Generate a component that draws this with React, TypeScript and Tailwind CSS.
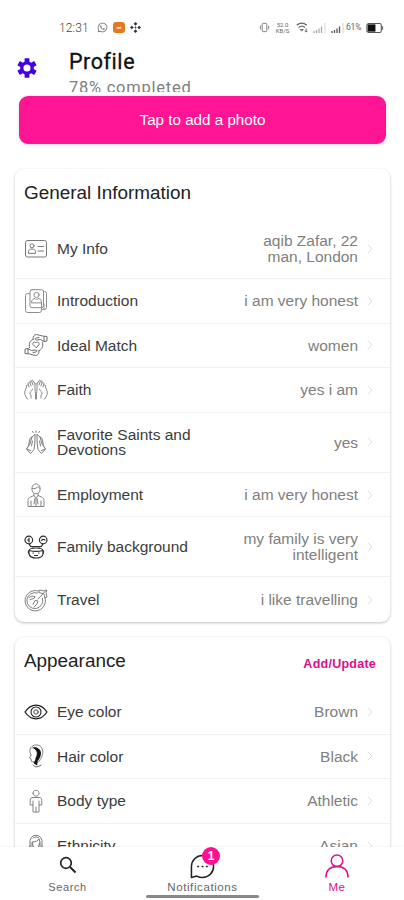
import React from "react";
import { FaWhatsapp } from "react-icons/fa";

type IconProps = {
  children: React.ReactNode;
  color?: string;
  weight?: number;
};

type RowData = {
  icon: React.ReactNode;
  label: string;
  value: string[];
  tall?: boolean;
};

function LineIcon({ children, color = "#707070", weight = 1 }: IconProps) {
  return (
    <svg
      viewBox="0 0 24 24"
      className="h-6 w-6 shrink-0"
      fill="none"
      stroke={color}
      strokeWidth={weight}
      strokeLinecap="round"
      strokeLinejoin="round"
    >
      {children}
    </svg>
  );
}

const CardIcon = (
  <LineIcon color="#777">
    <rect x="1.500" y="3.500" width="21" height="16.500" rx="2" />
    <circle cx="8" cy="8.800" r="2" />
    <path d="M4.500 16v-1.500c0-1.500 1.500-2 2.500-2.500h2c1 .5 2.500 1 2.500 2.500V16zM14 9.500h5.500M14 14h5.500" />
  </LineIcon>
);

const IntroIcon = (
  <LineIcon color="#8c8c8c">
    <path d="M5.500 4.500H3.500a2 2 0 0 0-2 2v15a2 2 0 0 0 2 2h12a2 2 0 0 0 2-2M8 .7h9.500a2 2 0 0 1 2 2v14a2 2 0 0 1-2 2H8a2 2 0 0 1-2-2v-14a2 2 0 0 1 2-2zM19.500 2.500h1a2 2 0 0 1 2 2v14a2 2 0 0 1-2 2h-3" />
    <circle cx="12.500" cy="6" r="2.600" />
    <path d="M7.500 13.500c0-3 2-4 3.500-4l1.500 1.500L14 9.500c2 0 3.500 1 3.500 4zM17.500 14v6M20 15v5" />
  </LineIcon>
);

const MatchIcon = (
  <LineIcon color="#6c6c6c">
    <path d="M9 6.500c0-3 1-5 3.500-5l6 1.500 4.500.5v4.500l-3 .5-3.500-2-4 .5c-1.500.2-2-1.500-.5-2l3-.5M15 17.500c0 3-1 5-3.500 5l-6-1.500-4.500-.5v-4.500l3-.5 3.500 2 4-.5c1.500-.2 2 1.500.5 2l-3 .5" />
    <path d="M5.500 14.500c-1-4 .5-7 3.500-8M18.500 9.500c1 4-.5 7-3.500 8M12 14.500l-3-3c-.8-2 1.500-3.300 3-1.500 1.500-1.800 3.800-.5 3 1.500zM20 3.500V8M4 16v4.500" />
  </LineIcon>
);

const FaithIcon = (
  <LineIcon color="#8c8c8c">
    <path d="M11.500 21v-5c0-2-.5-3-.5-5V5M11 6L9 2.500c-.8-.8-1.500-.2-1.300.7L9 7M7.500 3.500C6.500 2.500 5.500 3 6 4l1 4M5.800 5C4.500 4 3.800 5 4.200 6L5 9M4 7c-1.500-.5-2 .5-1.500 2l-1.500 4c-1 2.500 0 5 2.500 8M7 20v-3c-1.500-1-1.500-3 .5-4l1-2" />
    <path d="M12.500 21v-5c0-2 .5-3 .5-5V5M13 6l2-3.500c.8-.8 1.500-.2 1.300.7L15 7M16.500 3.500c1-1 2-.5 1.500.5l-1 4M18.200 5c1.300-1 2 0 1.600 1L19 9M20 7c1.500-.5 2 .5 1.500 2l1.500 4c1 2.500 0 5-2.500 8M17 20v-3c1.500-1 1.500-3-.5-4l-1-2" />
  </LineIcon>
);

const PrayIcon = (
  <LineIcon color="#7c7c7c">
    <path d="M10.800 4.500L8 7l-2 7-3.500 5 4 4.500 3.500-4 .8-6zM8 7c-1.500 0-2 1-2.300 3L4.500 16M2.500 19l4 1.500M8.500 11l-1 5M13.200 4.500L16 7l2 7 3.500 5-4 4.500-3.500-4-.8-6zM16 7c1.500 0 2 1 2.300 3l1.200 6M21.500 19l-4 1.500M15.500 11l1 5" />
    <path d="M12 .9v1.500M8.500 1.500l.8 1.200M15.500 1.500l-.8 1.200" />
  </LineIcon>
);

const WorkIcon = (
  <LineIcon color="#858585">
    <path d="M8 5c0-5.500 8-5.500 8 0v2c0 5-8 5-8 0zM8 5.500c3 .5 5-.5 6-2l2 2M10 10.500v2L6.500 14c-1.700.6-2.500 2-2.500 3.500v6h16v-6c0-1.500-.8-2.900-2.500-3.500L14 12.500v-2M10 12.500l2 3 2-3M11 15.500l-1 5.500M13 15.500l1 5.500M7 18v5.500M17 18v5.500M12 16v7" />
  </LineIcon>
);

const FamilyIcon = (
  <LineIcon color="#2d2d2d" weight={1.2}>
    <circle cx="4.800" cy="5" r="3.800" />
    <circle cx="19.200" cy="5" r="3.800" />
    <path d="M5 3v4M3.500 5h1.500M17.500 5.500c1-1.500 2-1.500 3.500-.5M5.500 9c0 2 1.500 3 4 3M18.500 9c0 2-1.500 3-4 3M8 11.500h8" />
    <path d="M5 16c0-4 14-4 14 0v2.500c0 6-14 6-14 0zM5 15.500c4 1 10 1 14 0M9 18h.5M14.500 18h.5M10.500 20.500h3M4.500 16v2M19.500 16v2" />
  </LineIcon>
);

const TravelIcon = (
  <LineIcon color="#808080">
    <path d="M21 9.500A10.200 10.200 0 1 1 14.500 3M18.500 10A8 8 0 1 1 13.500 5" />
    <path d="M14 11l8-8.500M15 4.500l5 1.500 1 4 2-1-1-4.500 1-2-1-.7-2 1.200L16 2zM5 9.500l3-1.500 3 .5-1 2-4 1M9 16.500l2-4 3 .5-1 3-3 3" />
  </LineIcon>
);

const EyeIcon = (
  <LineIcon color="#1f1f1f" weight={1.3}>
    <path d="M1 12c3-4.500 7-6.800 11-6.800s8 2.300 11 6.800c-3 4.500-7 6.800-11 6.800S4 16.500 1 12z" />
    <circle cx="12" cy="12" r="5" strokeWidth="1.100" />
    <circle cx="12" cy="12" r="2.200" strokeWidth=".8" />
  </LineIcon>
);

const HairIcon = (
  <LineIcon color="#777" weight={0.9}>
    <path d="M7 11C3.500 5 8 1 12 1c6-1 9 7 5 13-1 2-2 4-4 5M7 11l-1.500 3 1.500.7.5 3 3 .3M8 4c3-2 7 0 8 5" />
    <path
      d="M10 4c5-1 8 4 6 8-1 4-4 5-3 9l-3-2c1-2 2-3 2-5 2-4 2-7-2-10z"
      fill="#111"
      stroke="#111"
    />
    <path d="M9 21c2 2.500 5 2.500 8 0" stroke="#444" />
  </LineIcon>
);

const BodyIcon = (
  <LineIcon color="#858585">
    <path d="M9 4.200c0-4 6-4 6 0s-6 4-6 0zM8.500 8.500h7c1.500 0 2.300 1 2.300 2.500V16H15v7H9v-7H6.200v-5C6.200 9.500 7 8.500 8.500 8.500zM9 12v4M15 12v4M12 18v5" />
  </LineIcon>
);

const EthnicityIcon = (
  <LineIcon color="#777">
    <path d="M6 15V8c0-9 12-9 12 0v7M8 15V8c3 0 6-1 7-3l1 3v7M8.500 9c0 7 7 7 7 0M4.500 21c0-4 1.500-6 4-6h7c2.500 0 4 2 4 6M6 12l-1 4M18 12l1 4M9 4c2-1.500 4-1.500 6 0" />
  </LineIcon>
);

const general: RowData[] = [
  { icon: CardIcon, label: "My Info", value: ["aqib Zafar, 22", "man, London"], tall: true },
  { icon: IntroIcon, label: "Introduction", value: ["i am very honest"] },
  { icon: MatchIcon, label: "Ideal Match", value: ["women"] },
  { icon: FaithIcon, label: "Faith", value: ["yes i am"] },
  { icon: PrayIcon, label: "Favorite Saints and Devotions", value: ["yes"], tall: true },
  { icon: WorkIcon, label: "Employment", value: ["i am very honest"] },
  { icon: FamilyIcon, label: "Family background", value: ["my family is very", "intelligent"], tall: true },
  { icon: TravelIcon, label: "Travel", value: ["i like travelling"] },
];

const appearance: RowData[] = [
  { icon: EyeIcon, label: "Eye color", value: ["Brown"] },
  { icon: HairIcon, label: "Hair color", value: ["Black"] },
  { icon: BodyIcon, label: "Body type", value: ["Athletic"] },
  { icon: EthnicityIcon, label: "Ethnicity", value: ["Asian"] },
];

function Row({ icon, label, value, tall }: RowData) {
  return (
    <div
      className={`flex items-center border-b border-[#f1f1f1] pl-[9px] pr-[17px] text-[15.500px] leading-[15.500px] last:border-b-0 ${
        tall ? "h-[60px]" : "h-[44.600px]"
      }`}
    >
      {icon}
      <div className="ml-[9px] w-[145px] text-[#3c3c3c]">{label}</div>
      <div className="flex-1 text-right text-[#808080]">
        {value.map((line) => (
          <div key={line} className="whitespace-nowrap">
            {line}
          </div>
        ))}
      </div>
      <svg viewBox="0 0 6 10" className="ml-[9px] h-[10px] w-[6px]" fill="none" stroke="#dedede">
        <path d="M.7.7 5 5 .7 9.300" />
      </svg>
    </div>
  );
}

function Card({ title, rows, action }: { title: string; rows: RowData[]; action?: string }) {
  return (
    <section className="ml-[15px] mr-[14px] shrink-0 rounded-[9px] bg-white shadow-[0_1px_3px_rgba(0,0,0,0.25)]">
      <div className={`flex items-start justify-between pl-[9px] pr-[14px] ${action ? "h-[53px]" : "h-[50px]"}`}>
        <h2 className="pt-[11px] text-[18.900px] leading-[26px] text-[#222]">{title}</h2>
        {action && (
          <span className="pt-[18px] text-[12.500px] font-bold leading-[18px] tracking-[0.250px] text-[#dc0f8c]">
            {action}
          </span>
        )}
      </div>
      {rows.map((row) => (
        <Row key={row.label} {...row} />
      ))}
    </section>
  );
}

function Signal({ color }: { color: string }) {
  return (
    <svg viewBox="0 0 13 10" className="h-[10px] w-[13px]" fill="none" stroke={color} strokeWidth="1.300">
      <path d="M1 10V8M3.500 10V7M6 10V5.500M8.500 10V3.500" />
      <path d="M12 10V0" stroke="#ddd" />
    </svg>
  );
}

function StatusBar() {
  return (
    <div className="flex h-[40px] shrink-0 items-center pl-[59px] pr-[20px] pt-[15px] font-[Roboto] text-[#666]">
      <span className="w-[38px] text-[12px] font-light tracking-[0.1px] text-[#444]">12:31</span>
      <FaWhatsapp className="h-[11px] w-[11px] text-[#777]" />
      <span className="ml-[5px] flex h-[11px] w-[12px] items-center justify-center rounded-[3px] bg-[#e37a20] text-[4px] font-bold text-white">
        mi
      </span>
      <svg viewBox="0 0 12 12" className="ml-[5px] h-[11px] w-[11px]" fill="#333">
        <path d="M6 0l2 2-2 2-2-2zM6 8l2 2-2 2-2-2zM0 6l2-2 2 2-2 2zM8 6l2-2 2 2-2 2z" />
        <circle cx="6" cy="6" r="1" />
      </svg>
      <div className="ml-auto flex items-center">
        <svg viewBox="0 0 12 12" className="h-[11px] w-[11px]" fill="none" stroke="#777">
          <rect x="3.500" y="1.500" width="5" height="9" rx="1" />
          <path d="M1.500 4v4M10.500 4v4" />
        </svg>
        <div className="ml-[4px] w-[17px] text-center text-[6px] leading-[6px]">
          <div>52.0</div>
          <div>KB/S</div>
        </div>
        <svg viewBox="0 0 14 12" className="ml-[5px] h-[11px] w-[13px]" fill="none" stroke="#666" strokeWidth="1.300">
          <path d="M.7 3.500c3.500-3 7.500-3 11 0M2.700 6c2.500-2 5-2 7 0" />
          <path d="M4.500 8.200 6.200 10l1.600-1.800zM11 7v4M9.500 9.500l1.500 1.500 1.500-1.500" strokeWidth="1" />
        </svg>
        <span className="ml-[4px]">
          <Signal color="#aaa" />
        </span>
        <span className="ml-[5px]">
          <Signal color="#555" />
        </span>
        <span className="ml-[2px] w-[18px] text-[8.500px] leading-none tracking-[-0.2px]">61%</span>
        <svg viewBox="0 0 19 11" className="ml-[2px] h-[10px] w-[18px]">
          <rect x=".6" y=".6" width="15.800" height="9.800" rx="2" fill="white" stroke="#555" strokeWidth="1.200" />
          <rect x="1.500" y="1.500" width="8.500" height="8" fill="#111" />
          <path d="M17.800 3.500v4" stroke="#666" strokeWidth="1.200" />
        </svg>
      </div>
    </div>
  );
}

function Gear() {
  return (
    <svg viewBox="0 0 20 20" className="h-[20px] w-[20px]" fill="none" stroke="#4300e0">
      <circle cx="10" cy="10" r="5.200" strokeWidth="3.300" />
      <path
        d="M10 .3v4M10 15.700v4M1.600 5.150l3.400 2M15 12.850l3.400 2M1.600 14.850l3.400-2M15 7.150l3.400-2"
        strokeWidth="4.800"
      />
    </svg>
  );
}

function BottomNav() {
  return (
    <nav className="relative flex h-[53px] shrink-0 bg-white text-[11.500px] leading-[14px] tracking-[0.600px] text-[#666] shadow-[0_-1px_2px_rgba(0,0,0,0.04)]">
      <div className="flex w-[135px] flex-col items-center">
        <div className="flex h-[33px] items-center pt-[3px]">
          <svg viewBox="0 0 18 18" className="h-[18px] w-[18px]" fill="none" stroke="#222">
            <circle cx="7" cy="7" r="5.300" strokeWidth="1.700" />
            <path d="M11 11l5.500 5.500" strokeWidth="2" />
          </svg>
        </div>
        <span className="text-[11px]">Search</span>
      </div>
      <div className="flex w-[135px] flex-col items-center">
        <div className="relative flex h-[33px] items-center pt-[5px]">
          <svg viewBox="0 0 26 26" className="h-[25px] w-[25px]" fill="none" stroke="#222" strokeWidth="1.600">
            <path d="M1.500 24.500V13a11.500 11.500 0 1 1 11.500 11.500c-2.500 0-4.500-.7-6-1.500z" strokeLinejoin="round" />
            <path d="M7.500 13h2M12 13h2M16.500 13h2" strokeWidth="1.700" />
          </svg>
          <span className="absolute left-[12px] top-0 flex h-[18px] w-[18px] items-center justify-center rounded-full bg-[#ff0f93] text-[12px] font-bold tracking-normal text-white">
            1
          </span>
        </div>
        <span>Notifications</span>
      </div>
      <div className="flex w-[134px] flex-col items-center text-[#dc0f8c]">
        <div className="flex h-[33px] items-center pt-[4px]">
          <svg viewBox="0 0 24 24" className="h-6 w-6" fill="none" stroke="#dc0f8c" strokeWidth="1.500">
            <circle cx="12" cy="6.800" r="5.800" />
            <path d="M1 23.500c0-7 4-10.900 11-10.900s11 3.900 11 10.900" />
          </svg>
        </div>
        <span>Me</span>
      </div>
      <div className="absolute bottom-[2px] left-[146px] h-[3px] w-[113px] rounded-full bg-[#888]" />
    </nav>
  );
}

export default function App() {
  return (
    <div className="flex h-[900px] w-[404px] flex-col overflow-hidden bg-white font-['Liberation_Sans',Arial,sans-serif]">
      <StatusBar />
      <header className="flex h-[52px] shrink-0 overflow-hidden pl-[17px] font-[Roboto]">
        <div className="pt-[18px]">
          <Gear />
        </div>
        <div className="ml-[32px]">
          <h1 className="mt-[8px] text-[21.500px] leading-[27px] tracking-[0.550px] text-[#111] [-webkit-text-stroke:0.300px_#111]">
            Profile
          </h1>
          <p className="mt-[3px] text-[16.500px] leading-[20px] tracking-[0.750px] text-[#808080]">
            78% completed
          </p>
        </div>
      </header>
      <main className="flex min-h-0 flex-1 flex-col overflow-hidden pt-[4px]">
        <button className="ml-[19px] mr-[18px] h-[48px] shrink-0 rounded-[9px] bg-[#ff1493] text-[15.200px] text-white shadow-[0_1px_3px_rgba(0,0,0,0.15)]">
          Tap to add a photo
        </button>
        <div className="mt-[25px] flex flex-col gap-[15px]">
          <Card title="General Information" rows={general} />
          <Card title="Appearance" rows={appearance} action="Add/Update" />
        </div>
      </main>
      <BottomNav />
    </div>
  );
}
